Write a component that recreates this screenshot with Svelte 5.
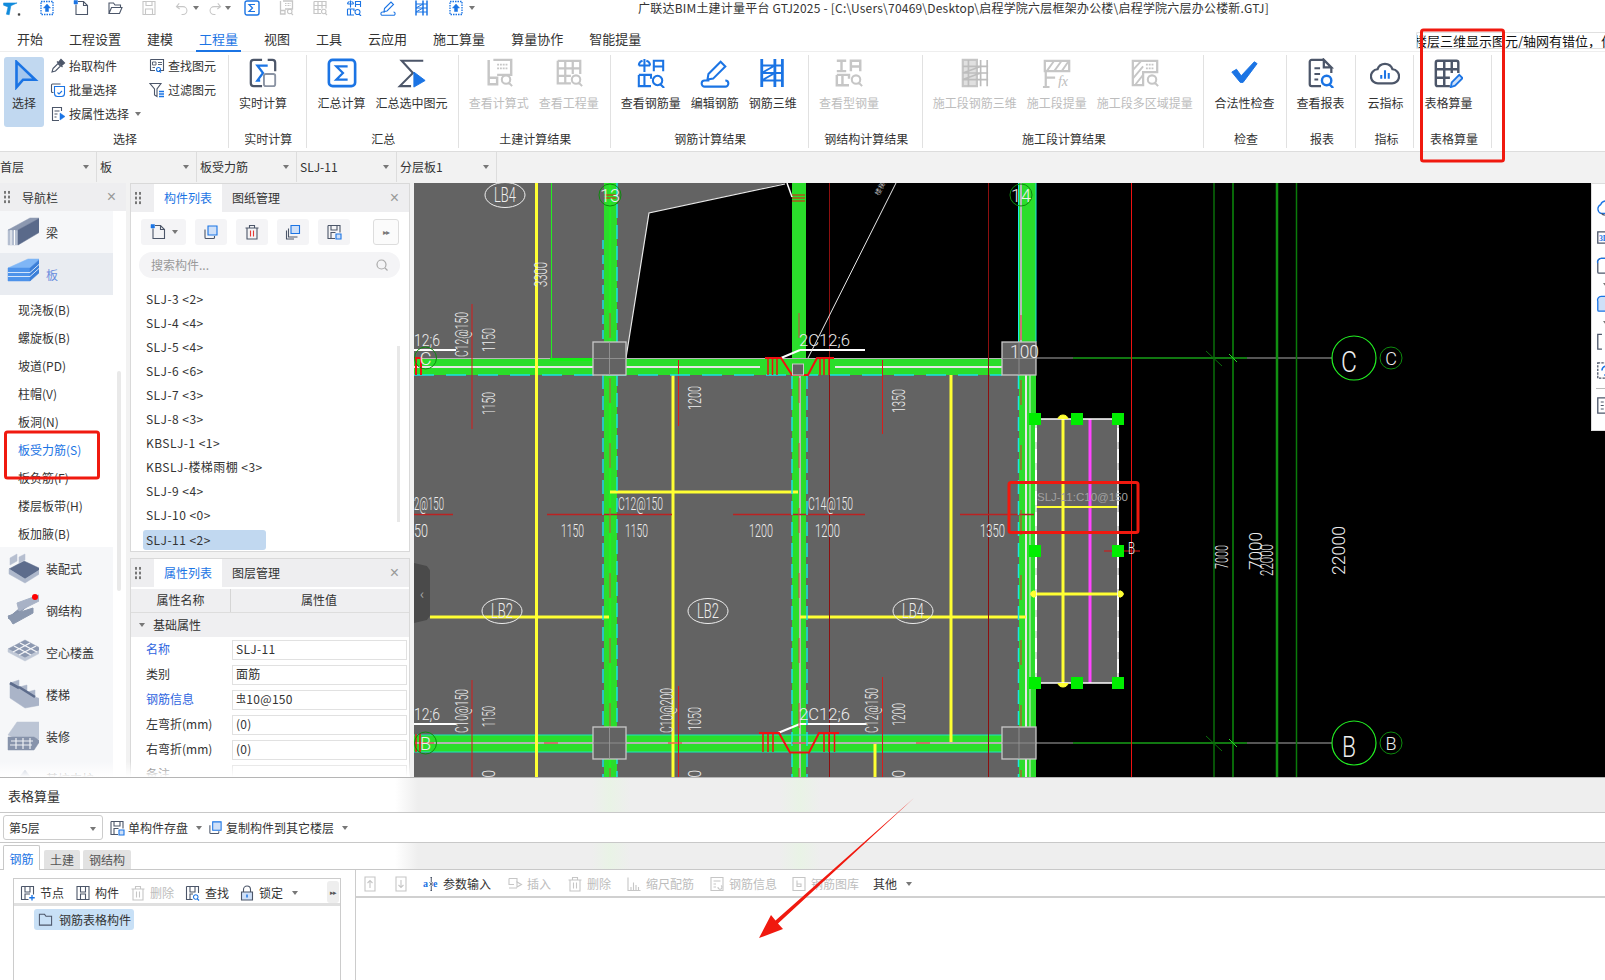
<script>
const S = '#4c5669', B = '#1b74e4', G = '#c6c6c6', L = '#cfe0f8';
const mag = (c, x = 0, y = 0) => [`M${19 + x} ${23 + y}a4.5 4.5 0 1 0 9 0a4.5 4.5 0 1 0-9 0M${26.5 + x} ${26.5 + y}l3.5 3.5`, c];
const icons = {
  logo: [['M1 7h24l-11 5-3 16-5-1 3-13-8-3Z', '#118bdc', '#118bdc', 1], ['M27 26h3v3h-3Z', '#333', '#333', 1]],
  upDoc: [['M4 3h24v26H4Z', B, 'none', 2.6, '3 2'], ['M16 8l-7 8h4v7h6v-7h4Z', B, B, 1]],
  newDoc: [['M6 9v20h23V11l-8-8H10', S], ['M21 3v8h8', S], ['M2 1h7v7H2Z', B, B, 1]],
  folder: [['M4 27V6h9l3 4h11v5M4 27h21l5-12H9Z', S]],
  save: [['M4 3h24v26H4ZM10 3v8h12V3M9 29V18h14v11', G]],
  undo: [['M9 5l-6 7 7 5M4 12h13a8.500 8.500 0 0 1 0 17h-3', G]],
  redo: [['M23 5l6 7-7 5M28 12H15a8.500 8.500 0 0 0 0 17h3', G]],
  sigmaBox: [['M6 2h20a4 4 0 0 1 4 4v20a4 4 0 0 1-4 4H6a4 4 0 0 1-4-4V6a4 4 0 0 1 4-4Z', B, 'none', 2.8], ['M22 9H10l7 7-7 7h12', B, 'none', 2.4]],
  sigmaCalc: [['M15 2H6a3 3 0 0 0-3 3v22a3 3 0 0 0 3 3h9M21 2h5a3 3 0 0 1 3 3v9', S, 'none', 2.4], ['M21 8H10l6 8-6 8h3', B, 'none', 2.4], ['M19 17h8a2 2 0 0 1 2 2v9a2 2 0 0 1-2 2h-8a2 2 0 0 1-2-2v-9a2 2 0 0 1 2-2Z', '#8a93a3', 'none', 2]],
  sigmaSel: [['M28 3H5l12 13L3 30h12', S, 'none', 2.2], ['M18 15l12 9-12 7Z', B, B, 1]],
  calcView: [['M5 2v26h9v-7H5', G, 'none', 2.6], ['M10 2h19v16H14', G, 'none', 2.6], ['M14 7h11M14 11h11', G, 'none', 2, '2 1'], mag(G)],
  qtyView: [['M4 3h24v14M4 3v24h14M4 11h24M4 19h14M12 3v24M20 3v14', G, 'none', 2.4], mag(G)],
  rebarView: [['M9 1v14M3 8a5.500 5.500 0 0 1 4-5M11 3a5.500 5.500 0 0 1 4 5M3 8h12', B], ['M19 14V3h10v11M19 9h10', B], ['M3 18v12h13M3 18h13v4M9 18v12', B], ['M18 24a5 5 0 1 0 10 0a5 5 0 1 0-10 0M26 28l4 4', B]],
  pencil: [['M9 17L22 4l5 5-13 13-6 1Z', B, 'none', 2.2], ['M10 24H5a3.200 3.200 0 0 0 0 6.500h22a3.200 3.200 0 0 0 0-6.500', B, 'none', 2.2]],
  frame: [['M4 1v30M18 1v30M26 1v30', B, 'none', 3], ['M4 8h22M4 16h22M4 24h22M4 16L18 8M4 24l14-8', B, 'none', 2]],
  steelView: [['M3 3h10M8 3v11M3 14h10', G, 'none', 2.6], ['M18 14V3h10v11M18 9h10', G, 'none', 2.6], ['M3 18v11h13M3 18h13v4M9 18v11', G, 'none', 2.6], mag(G)],
  segRebar: [['M3 2h15v28H3Z', G, '#e0e0e0', 2.4], ['M9 2v28M22 2v28M29 2v28M3 9h27M3 16h27M3 23h27M3 16l19-7M3 23l19-7', '#bdbdbd', 'none', 1.8]],
  segFx: [['M3 3h26v11H3Z', G, 'none', 2.4], ['M5 14l8-11M13 14l8-11M21 14l7-10', G, 'none', 2], ['M4 31V14M4 21h10M1 31h7', G, 'none', 2.4], { t: 'fx', x: 17, y: 30, s: 15, c: '#bdbdbd', it: 1 }],
  segArea: [['M3 3h26v12H14v14H3Z', G, 'none', 2.4], ['M3 13L12 3M3 22L14 9M6 28l8-10', G, 'none', 2], ['M17 7h9M17 11h9', G, 'none', 2, '2 1'], mag(G)],
  check: [['M3 15l5-3 5 7L27 4l3 2-15 20h-3Z', B, B, 1]],
  report: [['M19 2H6a2 2 0 0 0-2 2v24a2 2 0 0 0 2 2h10M19 2l8 8h-8ZM27 10v6', S, 'none', 2.4], ['M9 11h6M9 17h6M9 23h4', S], ['M17 24a5 5 0 1 0 10 0a5 5 0 1 0-10 0M25 28l4 4', B, 'none', 2.6]],
  cloud: [['M9 27a7.500 7.500 0 0 1-1-15a8.500 8.500 0 0 1 16 0a7.500 7.500 0 0 1-1 15Z', S, 'none', 2.4], ['M12 22v-4M16 22v-9M20 22v-6', B, 'none', 2.2]],
  tableEdit: [['M18 30H5a2 2 0 0 1-2-2V5a2 2 0 0 1 2-2h20a2 2 0 0 1 2 2v11M3 12h24M3 21h15M12 3v27M20 3v13', S, 'none', 2.6], ['M19 31l1-5 8-8 3.500 3.500-8 8Z', B, L, 2]],
  cursor: [['M8 2l20 19H15l-7 8Z', B, '#a5c7ee', 2.8]],
  dropper: [['M6 21l10-10 5 5-10 10-7 2Z', S], ['M17 9l5-6 7 7-6 5M14 7l11 11', S, S, 2.4]],
  batch: [['M7 21H5a2 2 0 0 1-2-2V6a2 2 0 0 1 2-2h16', S], ['M9 9h20v14a6 6 0 0 1-6 6H15a6 6 0 0 1-6-6Z', B], ['M15 21l3 3 6-6', B]],
  prop: [['M23 10V3H5v26h13', S], ['M9 10h10M9 16h6M9 22h4', S], ['M20 14l10 7-10 7Z', B, B, 1]],
  find: [['M3 3h26v22h-9M3 3v22h9', S], ['M7 8h7v6H7ZM18 9h8M18 13h8M7 19h5', S, 'none', 1.8], ['M15 23a4 4 0 1 0 8 0a4 4 0 1 0-8 0M21 26l3 3', B]],
  filter: [['M2 3h22l-8 11v15l-5-3V14Z', S], ['M20 19h10M20 24h10M20 29h10', B, 'none', 2.6]],
  copy: [['M4 11v16a2 2 0 0 0 2 2h15a2 2 0 0 0 2-2v-3', S], ['M10 4h18v18H10Z', B, L]],
  trash: [['M3 8h26M11 8V3h10v5M6 8v22h20V8', S]],
  trashR: [['M3 8h26M11 8V3h10v5M6 8v22h20V8', S], ['M13 13v12M19 13v12', '#e53935']],
  trashG: [['M3 8h26M11 8V3h10v5M6 8v22h20V8M13 13v12M19 13v12', G]],
  copy2: [['M3 13v17h15M7 9v17h18', S], ['M12 3h17v16H12Z', B, L]],
  saveB: [['M4 3h24v14M4 3v26h14M10 3v9h12V3M10 29V17h9', S], ['M20 20h10v10H20Z', B, L]],
  hDoc: [['M4 3h24v26H4ZM11 3v11h10V3M11 29V18h10v11', S]],
  hPlus: [['M3 3h24v16M3 3v26h14M10 3v11h10V3M10 29V18h10', S], ['M24 20v11M18.500 25.500h11', B, 'none', 2.6]],
  hFind: [['M3 3h24v13M3 3v26h12M10 3v11h10V3M10 29V18h6', S], ['M17 24a4.500 4.500 0 1 0 9 0a4.500 4.500 0 1 0-9 0M24 27l4 4', B]],
  lock: [['M9 14V9a7 7 0 0 1 14 0v5', S], ['M5 14h22v16H5Z', S, L], ['M16 19v6', B, 'none', 3]],
  fold: [['M3 28V5h11l3 4h12v19Z', S]],
  up: [['M6 2h20v28H6Z', G], ['M16 24V9M11 14l5-5 5 5', G]],
  down: [['M6 2h20v28H6Z', G], ['M16 8v15M11 18l5 5 5-5', G]],
  ae: [{ t: 'a', x: 0, y: 22, s: 20, c: B, b: 1 }, { t: 'e', x: 20, y: 22, s: 20, c: B, b: 1 }, ['M15 3h3M15 29h3M16.500 3v10M16.500 19v10M13 13l7 6M20 13l-7 6', S, 'none', 2]],
  insert: [['M4 5h16v8M4 5v12h10M4 24h16', G], ['M20 12l9 5-9 5Z', G]],
  scale: [['M4 3v26h25', G], ['M10 22v6M15 13v15M20 18v10M25 22v6', G]],
  info: [['M4 3h24v26H4Z', G], ['M9 10h14M9 16h5M9 22h5', G], ['M18 22a4 4 0 1 0 6-3', G]],
  lib: [['M4 3h24v26H4Z', G], ['M12 9v12h8v-5h-8', G]],
  r3: [['M3 10h18l8-6v22a3 3 0 0 1-3 3H3Z', S], { t: '3D', x: 5, y: 25, s: 13, c: B, b: 1 }],
  rcloud: [['M9 26a8 8 0 0 1-1-15a9 9 0 0 1 17 0M7 26h18', B], ['M9 26a8 8 0 0 0 6 3', S]],
  rbox: [['M3 12a6 6 0 0 1 6-8h20v25H5a2 2 0 0 1-2-2Z', S], ['M3 12a6 6 0 0 1 6-8h20', B]],
  rboxB: [['M3 12a6 6 0 0 1 6-8h20v25H5a2 2 0 0 1-2-2Z', B, L]],
  rdash: [['M10 4H3v25h7M18 4h11M18 29h11', S]],
  rdash2: [['M3 3h26v26H3Z', S, 'none', 2.2, '4 2'], ['M10 16a8 8 0 0 1 14-5M26 14a8 8 0 0 1-12 9', B, 'none', 2.6]],
  rlist: [['M3 3h26v26H3Z', S], ['M8 10h5M8 16h5M8 22h5M16 10h12M16 16h12M16 22h12', S, 'none', 1.8]],
  beam: [['M1 14h10v15H1Z', '#b4bed0', '#b4bed0', .5], ['M1 14L23 2h10L11 14Z', '#8c98b0', '#8c98b0', .5], ['M11 14L33 2v14L11 29Z', '#5a6a8a', '#5a6a8a', .5], ['M4 14v15M7.500 14v15', '#fff', 'none', 1]],
  slab: [['M1 10L21 1h12L23 10Z', '#7fb6f6', '#7fb6f6', .5], ['M1 10h22v13H1Z', '#4d93ea', '#4d93ea', .5], ['M23 10L33 1v13L23 23Z', '#3b7fd8', '#3b7fd8', .5], ['M1 14.500h22l10-9M1 18.500h22l10-9', '#d3e5fb', 'none', 1]],
  prefab: [['M2 17L17 9l17 8-16 10Z', '#5d6c8c', '#5d6c8c', .5], ['M2 17v5l16 9 16-10v-4l-16 10Z', '#aeb8cb', '#aeb8cb', .5], ['M3 6l7-4v7l-7 4ZM12 5l6-3v6l-6 3Z', '#b6bfd0', '#b6bfd0', .5]],
  steel: [['M1 24L24 5v4L4 26Z', '#8592aa', '#8592aa', 1], ['M10 9l22-8v6L12 17Z', '#a8b2c6', '#a8b2c6', 1], ['M1 22l25-8v5L6 30Z', '#8a97ae', '#8a97ae', 1]],
  hollow: [['M1 13L18 4l17 9-17 9Z', '#8c98b0', '#8c98b0', .5], ['M1 13v3l17 9 17-9v-3l-17 9Z', '#c0c8d6', '#c0c8d6', .5], ['M7 10l17 9M13 7l17 9M29 10l-17 9M23 7L6 16', '#f5f6f8', 'none', 1.4]],
  stairs: [['M3 5l9-3v7l8-2v7l8-2v7l6 2v6L18 30 3 20Z', '#aab4c8', '#aab4c8', .5], ['M3 5l9 5M12 9l8 5M20 14l8 5', '#5d6c8c', 'none', 2.6]],
  finish: [['M1 15L10 2h22v17H10Z', '#bcc5d5', '#bcc5d5', .5], ['M1 17h26l6 4-6 9H1Z', '#8793ab', '#8793ab', .5], ['M4 21h22M3 25h22M9 18v11M16 18v11M23 18v11', '#eef0f4', 'none', 1.2]],
  other: [['M2 28L18 8l16 20Z', '#aab4c8', '#aab4c8', .5]],
};
const tabs = ['开始', '工程设置', '建模', '工程量', '视图', '工具', '云应用', '施工算量', '算量协作', '智能提量'];
const groups = [
  { label: '实时计算', w: 77.6, pl: 0, btns: [['实时计算', 'sigmaCalc', 68]] },
  { label: '汇总', w: 152.1, pl: 0, btns: [['汇总计算', 'sigmaBox', 70], ['汇总选中图元', 'sigmaSel', 70]] },
  { label: '土建计算结果', w: 152, pl: 5, off: 1, btns: [['查看计算式', 'calcView', 70], ['查看工程量', 'qtyView', 70]] },
  { label: '钢筋计算结果', w: 198.3, pl: 0, btns: [['查看钢筋量', 'rebarView', 80], ['编辑钢筋', 'pencil', 48], ['钢筋三维', 'frame', 68]] },
  { label: '钢结构计算结果', w: 113.7, pl: 0, off: 1, btns: [['查看型钢量', 'steelView', 80]] },
  { label: '施工段计算结果', w: 281.8, pl: 0, off: 1, btns: [['施工段钢筋三维', 'segRebar', 104], ['施工段提量', 'segFx', 60], ['施工段多区域提量', 'segArea', 116]] },
  { label: '检查', w: 82.1, pl: 0, btns: [['合法性检查', 'check', 80]] },
  { label: '报表', w: 69.9, pl: 0, btns: [['查看报表', 'report', 68]] },
  { label: '指标', w: 58, pl: 0, btns: [['云指标', 'cloud', 58]] },
  { label: '表格算量', w: 78, pl: 0, btns: [['表格算量', 'tableEdit', 68]] },
];
const selects = ['首层', '板', '板受力筋', 'SLJ-11', '分层板1'];
const subs = ['现浇板(B)', '螺旋板(B)', '坡道(PD)', '柱帽(V)', '板洞(N)', '板受力筋(S)', '板负筋(F)', '楼层板带(H)', '板加腋(B)'];
const cats = [['装配式', 'prefab'], ['钢结构', 'steel', 1], ['空心楼盖', 'hollow'], ['楼梯', 'stairs'], ['装修', 'finish'], ['基坑支护', 'other']];
const parts = ['SLJ-3 <2>', 'SLJ-4 <4>', 'SLJ-5 <4>', 'SLJ-6 <6>', 'SLJ-7 <3>', 'SLJ-8 <3>', 'KBSLJ-1 <1>', 'KBSLJ-楼梯雨棚 <3>', 'SLJ-9 <4>', 'SLJ-10 <0>', 'SLJ-11 <2>'];
const props = [['名称', 'SLJ-11', 1], ['类别', '面筋'], ['钢筋信息', '10@150', 1, 1], ['左弯折(mm)', '(0)'], ['右弯折(mm)', '(0)'], ['备注', '']];
const railIcons = [['rcloud', 28], ['r3', 30], ['rbox', 38, 1], ['rboxB', 38, 1], ['rdash', 29], ['rdash2', 35], ['rlist', 30]];
const leftTools = [['节点', 'hPlus', 0, 11], ['构件', 'hDoc', 0, 11], ['删除', 'trashG', 1, 11], ['查找', 'hFind', 0, 10], ['锁定', 'lock', 0, 9, 1]];
const rightTools = [['参数输入', 'ae', 0, 16, 0], ['插入', 'insert', 1, 16, 0], ['删除', 'trashG', 1, 15, 0], ['缩尺配筋', 'scale', 1, 15, 0], ['钢筋信息', 'info', 1, 14, 0], ['钢筋图库', 'lib', 1, 14, 0]];

/* CAD drawing data, page coordinates through the viewBox */
const greys = ['M414 183H786L649 213L626 358H414Z', 'M414 358H1036V777H414Z', 'M1036 419H1118V683H1036Z'];
const greens = [[604, 183, 13, 594], [792, 183, 14, 594], [1019, 183, 17, 594], [414, 359, 605, 16], [414, 735, 605, 17]];
const lines = [
  [414, 367, 593, 367, '#e6e6e6', 2], [626, 367, 760, 367, '#e6e6e6', 2], [835, 367, 1002, 367, '#e6e6e6', 2],
  [414, 358.500, 1019, 358.500, '#b8b8b8', 1], [414, 743, 1002, 743, '#b4b4b4', 2],
  [610, 183, 610, 777, '#22ee22', 2],
  [800, 375, 800, 777, '#b8b8b8', 2], [1021, 183, 1021, 342, '#b8b8b8', 2], [1026, 375, 1026, 777, '#e8e8e8', 2], [1030, 375, 1030, 777, '#e8e8e8', 1],
  [414, 735, 1002, 735, '#19e8c0', 1], [414, 752, 1002, 752, '#19e8c0', 1], [1018.500, 183, 1018.500, 342, '#19e8e8', 1], [1036, 183, 1036, 342, '#19e8e8', 1],
  [536.500, 183, 536.500, 777, '#ffff33', 3], [673, 375, 673, 777, '#ffff33', 3], [951, 375, 951, 742, '#ffff33', 3], [875, 744, 875, 777, '#ffff33', 3],
  [610, 492, 798, 492, '#ffff33', 3], [430, 617, 609, 617, '#ffff33', 3], [800, 617, 1026, 617, '#ffff33', 3],
  [551.500, 183, 551.500, 358, '#22ee22', 1], [550, 359.500, 593, 359.500, '#14f014', 3],
  [472, 304, 472, 429, '#d81c1c', 1], [678.500, 360, 678.500, 426, '#d81c1c', 1], [882.500, 360, 882.500, 434, '#d81c1c', 1],
  [472, 680, 472, 777, '#d81c1c', 1], [678.500, 686, 678.500, 777, '#d81c1c', 1], [882.500, 677, 882.500, 777, '#d81c1c', 1],
  [829.500, 183, 829.500, 777, '#8c0f0f', 1], [988.500, 183, 988.500, 777, '#8c0f0f', 1],
  [414, 514.500, 453, 514.500, '#bb2222', 1.5], [547, 514.500, 672, 514.500, '#bb2222', 1.5], [733, 514.500, 865, 514.500, '#bb2222', 1.5], [960, 514.500, 1034, 514.500, '#bb2222', 1.5],
  [414, 350, 456, 350, '#fff', 2], [800, 350, 865, 350, '#fff', 2], [781, 358, 800, 350, '#fff', 2], [414, 724, 456, 724, '#fff', 2], [800, 724, 866, 724, '#fff', 2], [778, 733, 800, 724, '#fff', 2],
  [808, 358, 896, 183, '#e8e8e8', 1], [787, 183, 792, 197, '#fff', 1.5],
  [1036, 358, 1073, 358, '#aaa', 1], [1073, 358, 1247, 358, '#22ee22', 1], [1247, 358, 1332, 358, '#aaa', 1],
  [1036, 743, 1073, 743, '#aaa', 1], [1073, 743, 1247, 743, '#22ee22', 1], [1247, 743, 1332, 743, '#aaa', 1],
  [1214, 183, 1214, 777, '#0a6e0a', 1.5], [1233, 183, 1233, 777, '#0b8c0b', 1.5], [1277, 183, 1277, 777, '#118f11', 2.5], [1296.500, 183, 1296.500, 777, '#0a7a0a', 1.5],
  [1131.500, 183, 1131.500, 777, '#ee1111', 1],
  [1206, 351, 1222, 366, '#0a6e0a', 1], [1229, 354, 1237, 362, '#22dd22', 1], [1206, 736, 1222, 751, '#0a6e0a', 1], [1229, 739, 1237, 747, '#22dd22', 1],
  [1063, 419, 1063, 683, '#ffff33', 3], [1090, 419, 1090, 683, '#ff44ff', 3], [1036, 507, 1118, 507, '#ffff33', 2], [1036, 594, 1118, 594, '#ffff33', 3],
  [1104, 551, 1140, 551, '#dd1111', 1],
];
const dashes = [
  [603, 375, 603, 777, '#19e3e3', 1.5, '14 7'], [617, 183, 617, 777, '#19e3e3', 1.5, '14 7'], [603, 240, 603, 342, '#19e3e3', 1.5, '9 6'],
  [792, 375, 792, 777, '#19e3e3', 1.5, '14 7'], [807, 375, 807, 777, '#19e3e3', 1.5, '14 7'],
  [1018.500, 375, 1018.500, 777, '#19e3e3', 1.5, '14 7'],
  [414, 375, 1002, 375, '#19e3e3', 1.5, '20 12'],
  [610, 313, 610, 777, '#c44', 1, '25 40'], [799, 313, 799, 777, '#c44', 1, '25 40'], [1021, 315, 1021, 777, '#d33', 1, '25 40'],
  [420, 743, 1000, 743, '#d33', 1, '14 110'],
  [1036, 428, 1036, 682, '#fff', 2, '14 7'], [1118, 428, 1118, 682, '#ddd', 2, '14 7'],
];
const rebars = [
  ['M765 358H781L792 375H808L817 358H834M416 375V358H421V375', 'M768 358V375M772.500 358V375M777 358V375M820 358V375M824 358V375M829 358V375'],
  ['M759 733H779L790 752.500H809L819 733H839', 'M763 733V752M768 733V752M773 733V752M824 733V752M829 733V752M834.500 733V752M416 734V752M420 734V752'],
];
const rot = [
  ['3300', 540, 262, 287], ['C12@150', 461, 312, 357], ['1150', 487.500, 328, 352], ['1150', 487.500, 392, 415], ['1200', 693.500, 386, 410], ['1350', 898, 389, 413],
  ['C10@150', 461, 689, 733], ['1150', 487.500, 706, 727], ['C10@200', 666, 688, 733], ['1050', 693.500, 707, 731], ['C12@150', 871, 688, 733], ['1200', 898, 703, 726],
  ['50', 487.500, 770, 785], ['50', 693.500, 770, 785], ['00', 898, 770, 785],
  ['7000', 1221, 545, 569], ['7000', 1255, 532, 570], ['22000', 1266, 544, 576], ['22000', 1338, 526, 575],
];
const hor = [
  ['12;6', 414, 346, 26, 17], ['2C12;6', 799, 346, 51, 17], ['12;6', 414, 720, 26, 17], ['2C12;6', 799, 720, 51, 17], ['100', 1010, 358, 29, 18],
  ['2@150', 414, 510, 30, 19], ['C12@150', 618, 510, 45, 19], ['C14@150', 808, 510, 45, 19],
  ['50', 414, 537, 14, 18], ['1150', 561, 537, 23, 18], ['1150', 625, 537, 23, 18], ['1200', 749, 537, 24, 18], ['1200', 815, 537, 25, 18], ['1350', 980, 537, 25, 18],
];
const ellipses = [['LB4', 505, 195], ['LB2', 502, 611], ['LB2', 708, 611], ['LB4', 913, 611]];
const columns = [[593, 342, 33, 33], [1002, 342, 34, 33], [593, 727, 33, 32], [1002, 727, 34, 32]];
const small = [['13', 610, 195], ['14', 1021, 195], ['C', 425.500, 358], ['B', 425.500, 743], ['C', 1391, 358], ['B', 1391, 743]];
const handles = [[1035, 419], [1077, 419], [1118, 419], [1035, 551], [1118, 551], [1035, 683], [1077, 683], [1118, 683]];
</script>

{#snippet icon(name, size = 30)}
  <svg class="ic" width={size} height={size} viewBox="0 0 32 32" aria-hidden="true">
    {#each icons[name] as p}
      {#if p.t}
        <text x={p.x} y={p.y} font-size={p.s} fill={p.c} font-weight={p.b ? 700 : 400} font-style={p.it ? 'italic' : 'normal'} font-family="Liberation Serif, serif">{p.t}</text>
      {:else}
        <path d={p[0]} stroke={p[1]} fill={p[2] || 'none'} stroke-width={p[3] || 2.2} stroke-dasharray={p[4]} />
      {/if}
    {/each}
  </svg>
{/snippet}

{#snippet grip()}<i class="grip"></i>{/snippet}

<div class="app">
  <header class="titlebar">
    <span class="logo">{@render icon('logo', 18)}</span>
    <div class="qat">
      {@render icon('upDoc', 16)}
      {@render icon('newDoc', 16)}
      {@render icon('folder', 16)}
      {@render icon('save', 16)}
      <span class="q">{@render icon('undo', 15)}<b class="caret"></b></span>
      <span class="q">{@render icon('redo', 15)}<b class="caret"></b></span>
      {@render icon('sigmaBox', 16)}
      {@render icon('calcView', 16)}
      {@render icon('qtyView', 16)}
      {@render icon('rebarView', 16)}
      {@render icon('pencil', 16)}
      {@render icon('frame', 16)}
      {@render icon('upDoc', 16)}
      <b class="caret more"></b>
    </div>
    <div class="title">广联达BIM土建计量平台 GTJ2025 - [C:\Users\70469\Desktop\启程学院六层框架办公楼\启程学院六层办公楼新.GTJ]</div>
  </header>

  <nav class="tabs">
    {#each tabs as t}<span class="tab" class:on={t === '工程量'}>{t}</span>{/each}
  </nav>

  <section class="ribbon">
    <div class="group first">
      <div class="seltools">
        <button class="selbtn">{@render icon('cursor', 30)}<span>选择</span></button>
        <div class="smalls a">
          <span class="sm">{@render icon('dropper', 16)}抬取构件</span>
          <span class="sm">{@render icon('batch', 16)}批量选择</span>
          <span class="sm">{@render icon('prop', 16)}按属性选择<b class="caret"></b></span>
        </div>
        <div class="smalls">
          <span class="sm">{@render icon('find', 16)}查找图元</span>
          <span class="sm">{@render icon('filter', 16)}过滤图元</span>
        </div>
      </div>
      <div class="glabel">选择</div>
    </div>
    {#each groups as g}
      <div class="group" style="width:{g.w}px">
        <div class="btns" style="padding-left:{g.pl}px">
          {#each g.btns as b}
            <div class="big" class:off={g.off} style="width:{b[2]}px">
              {@render icon(b[1], 30)}
              <span>{b[0]}</span>
            </div>
          {/each}
        </div>
        <div class="glabel">{g.label}</div>
      </div>
    {/each}
  </section>

  <div class="selects">
    {#each selects as s}<div class="combo">{s}<b class="caret"></b></div>{/each}
  </div>

  <main class="work">
    <aside class="navbar">
      <div class="phead nav-head">{@render grip()}<span class="ntitle">导航栏</span><em class="close">×</em></div>
      <div class="navbody">
        <div class="navlist">
          <div class="cat">{@render icon('beam', 32)}<span>梁</span></div>
          <div class="cat cur">{@render icon('slab', 32)}<span>板</span></div>
          {#each subs as s}<div class="sub" class:act={s.startsWith('板受力筋')}>{s}</div>{/each}
          {#each cats as c}
            <div class="cat">
              {@render icon(c[1], 32)}
              {#if c[2]}<i class="dot"></i>{/if}
              <span>{c[0]}</span>
            </div>
          {/each}
        </div>
        <div class="navscroll"><i></i></div>
      </div>
    </aside>

    <div class="panels">
      <section class="panel parts">
        <div class="phead">{@render grip()}<span class="ptab on">构件列表</span><span class="ptab">图纸管理</span><em class="close">×</em></div>
        <div class="ptools">
          <span class="tb wide">{@render icon('newDoc', 16)}<b class="caret"></b></span>
          <span class="tb">{@render icon('copy', 16)}</span>
          <span class="tb">{@render icon('trashR', 16)}</span>
          <span class="tb">{@render icon('copy2', 16)}</span>
          <span class="tb">{@render icon('saveB', 16)}</span>
          <span class="tb expand"><b>▸▸</b></span>
        </div>
        <div class="search"><span>搜索构件...</span><svg width="12" height="12" viewBox="0 0 12 12"><path d="M1 5.500a4.500 4.500 0 1 0 9 0a4.500 4.500 0 1 0-9 0M9 9l2.500 2.500" fill="none" stroke="#aaa" stroke-width="1.200" /></svg></div>
        <div class="plist">
          {#each parts as p}<div class="pitem"><span class:sel={p.startsWith('SLJ-11')}>{p}</span></div>{/each}
          <i class="pscroll"></i>
        </div>
      </section>
      <section class="panel attrs">
        <div class="phead">{@render grip()}<span class="ptab on">属性列表</span><span class="ptab">图层管理</span><em class="close">×</em></div>
        <div class="thead"><span>属性名称</span><span>属性值</span></div>
        <div class="tsection"><b class="caret"></b>基础属性</div>
        {#each props as r}
          <div class="trow">
            <span class="k" class:link={r[2]}>{r[0]}</span>
            <span class="v">{#if r[3]}<small>虫</small>{/if}{r[1]}</span>
          </div>
        {/each}
      </section>
      <i class="fade"></i>
    </div>

    <div class="canvas">
      <svg width="1191" height="594" viewBox="414 183 1191 594" class="cad">
        <rect x="414" y="183" width="1191" height="594" fill="#000" />
        {#each greys as d}<path {d} fill="#636363" />{/each}
        <path d="M626 358L649 213L785 184" fill="none" stroke="#e8e8e8" stroke-width="1.200" />
        {#each greens as r}<rect x={r[0]} y={r[1]} width={r[2]} height={r[3]} fill="#2bdd2b" />{/each}
        {#each lines as l}<line x1={l[0]} y1={l[1]} x2={l[2]} y2={l[3]} stroke={l[4]} stroke-width={l[5]} />{/each}
        {#each dashes as l}<line x1={l[0]} y1={l[1]} x2={l[2]} y2={l[3]} stroke={l[4]} stroke-width={l[5]} stroke-dasharray={l[6]} />{/each}
        <rect x="1036" y="419" width="82" height="264" fill="none" stroke="#fff" stroke-width="1.500" />
        <path d="M792 195h13M792 198h13M792 201h13M604 195h12M604 198h12" stroke="#f01010" stroke-width="1.200" fill="none" />
        {#each rebars as r}
          <path d={r[0]} fill="none" stroke="#f01010" stroke-width="2" />
          <path d={r[1]} fill="none" stroke="#f01010" stroke-width="1.500" />
        {/each}
        {#each columns as c}
          <rect x={c[0]} y={c[1]} width={c[2]} height={c[3]} fill="#636363" stroke="#c8c8c8" stroke-width="1.300" />
          <path d="M{c[0] + c[2] / 2} {c[1]}v{c[3]}M{c[0]} {c[1] + c[3] / 2}h{c[2]}" stroke="#9a9a9a" stroke-width=".8" />
        {/each}
        <rect x="792.500" y="364" width="11" height="11" fill="#636363" stroke="#ccc" />
        <g class="cadtext" fill="#eee">
          {#each rot as t}
            <text transform="translate({t[1] + 7} {t[3]}) rotate(-90)" font-size="19" textLength={t[3] - t[2]} lengthAdjust="spacingAndGlyphs">{t[0]}</text>
          {/each}
          {#each hor as t}
            <text x={t[1]} y={t[2]} font-size={t[4]} textLength={t[3]} lengthAdjust="spacingAndGlyphs">{t[0]}</text>
          {/each}
          {#each ellipses as e}
            <ellipse cx={e[1]} cy={e[2]} rx="20" ry="12.500" fill="none" stroke="#eee" stroke-width="1" />
            <text x={e[1] - 11} y={e[2] + 7} font-size="20" textLength="22" lengthAdjust="spacingAndGlyphs">{e[0]}</text>
          {/each}
          {#each small as s}
            <circle cx={s[1]} cy={s[2]} r="11" fill="none" stroke="#0e8a0e" stroke-width="1" />
            <text x={s[1]} y={s[2] + 7} font-size="18" text-anchor="middle">{s[0]}</text>
          {/each}
          <circle cx="1354" cy="358" r="22" fill="none" stroke="#22ee22" stroke-width="1.200" />
          <circle cx="1354" cy="743" r="22" fill="none" stroke="#22ee22" stroke-width="1.200" />
          <text x="1341" y="372" font-size="29" textLength="16" lengthAdjust="spacingAndGlyphs">C</text>
          <text x="1342" y="757" font-size="29" textLength="14" lengthAdjust="spacingAndGlyphs">B</text>
          <text x="1128" y="554" font-size="17" textLength="7" lengthAdjust="spacingAndGlyphs">B</text>
          <text transform="translate(879 196) rotate(-62)" font-size="7" font-family="Noto Sans CJK SC, sans-serif">楼梯间</text>
          <text class="sel-label" x="1037" y="501" font-size="11.500" fill="#a0a0a0" textLength="91" lengthAdjust="spacingAndGlyphs">SLJ-11:C10@150</text>
        </g>
        {#each handles as h}<rect x={h[0] - 6} y={h[1] - 6} width="12" height="12" fill="#00ee00" />{/each}
        <path d="M1036 592a3 3 0 1 0 0 4M1118 592a3 3 0 1 1 0 4M1058 419a5 4 0 0 1 10 0M1058 683a5 4 0 0 0 10 0" fill="#ffff33" stroke="#ffff33" />
      </svg>
      <div class="collapse"><span>‹</span></div>
      <div class="rail">
        {#each railIcons as n}
          <span class="ri" style="height:{n[1]}px">{@render icon(n[0], 19)}{#if n[2]}<b class="caret"></b>{/if}</span>
        {/each}
        <hr />
      </div>
    </div>
  </main>

  <section class="calc">
    <div class="ctitle">表格算量</div>
    <div class="cbar">
      <div class="ccombo">第5层<b class="caret"></b></div>
      <span class="cact first">{@render icon('saveB', 16)}单构件存盘<b class="caret"></b></span>
      <span class="cact">{@render icon('copy', 15)}复制构件到其它楼层<b class="caret"></b></span>
    </div>
    <div class="ctabs">
      <span class="ctab on">钢筋</span><span class="ctab">土建</span><span class="ctab">钢结构</span>
    </div>
    <div class="cbody">
      <div class="cleft">
        <div class="lpane">
          <div class="ltools">
            {#each leftTools as t}
              <span class="lt" class:dim={t[2]} style="margin-right:{t[3]}px">{@render icon(t[1], 16)}{t[0]}{#if t[4]}<b class="caret"></b>{/if}</span>
            {/each}
            <span class="lexpand">▸▸</span>
          </div>
          <div class="lrow"><span class="lsel">{@render icon('fold', 15)}钢筋表格构件</span></div>
        </div>
      </div>
      <div class="cright">
        <div class="rtools">
          <span class="rbtn">{@render icon('up', 16)}</span>
          <span class="rbtn">{@render icon('down', 16)}</span>
          {#each rightTools as t}
            <span class="lt" class:dim={t[2]} style="margin-right:{t[3]}px">{@render icon(t[1], 16)}{t[0]}</span>
          {/each}
          <span class="lt">其他<b class="caret"></b></span>
        </div>
      </div>
    </div>
  </section>

  <div class="floatbox"><span>楼层三维显示图元/轴网有错位，位置不对</span></div>
  <svg class="marks" width="1605" height="980" viewBox="0 0 1605 980" aria-hidden="true">
    <rect x="1421.500" y="30" width="82" height="131" rx="2" />
    <rect x="5.500" y="432" width="93" height="46" rx="2" />
    <rect x="1009" y="482.500" width="129" height="50" rx="2" />
    <path class="arrow" d="M914 798L778 923.500L783 929L759 938L771 915L775.500 920.500Z" />
  </svg>
</div>

<style>
  :global(body) { margin: 0; background: #fff; }
  .app { position: relative; width: 1605px; height: 980px; overflow: hidden; background: #fff; color: #333; font: 12px/16px "Noto Sans CJK SC", "Noto Sans", sans-serif; }
  .ic { display: block; flex: none; }
  .caret { display: inline-block; width: 0; height: 0; border: 3px solid transparent; border-top: 4px solid #777; border-bottom: 0; flex: none; }

  .titlebar { height: 27px; display: flex; align-items: center; background: #fff; padding: 0 0 11px 3px; box-sizing: border-box; }
  .logo { width: 20px; }
  .qat { display: flex; align-items: center; gap: 18px; margin-left: 16px; width: 599px; }
  .q { display: flex; align-items: center; gap: 3px; margin-right: -10px; }
  .q + .q { margin-right: -5px; }
  .qat .more { margin-left: -13px; }
  .title { font-size: 12px; white-space: nowrap; color: #333; letter-spacing: .21px; }

  .tabs { height: 24px; display: flex; gap: 26px; padding-left: 17px; align-items: stretch; border-bottom: 1px solid #eee; box-sizing: content-box; }
  .tab { font-size: 13px; line-height: 24px; color: #333; position: relative; }
  .tab.on { color: #1b74e4; }
  .tab.on::after { content: ""; position: absolute; left: -3px; right: -3px; bottom: -1px; height: 2px; background: #1b74e4; }

  .ribbon { height: 99px; display: flex; background: #fff; border-bottom: 1px solid #ddd; }
  .group { height: 93px; margin-top: 3px; display: grid; grid-template-rows: 75px 18px; border-right: 1px solid #e1e1e1; box-sizing: border-box; flex: none; }
  .group.first { width: 229px; }
  .seltools { display: flex; padding: 2px 0 0 4px; }
  .selbtn { width: 40px; height: 70px; border: 0; border-radius: 3px; background: #c1d8f0; font: inherit; color: #333; padding: 3px 0 0; display: flex; flex-direction: column; align-items: center; gap: 5px; }
  .smalls { width: 99px; display: flex; flex-direction: column; gap: 8px; padding-top: 1px; }
  .smalls.a { margin-left: 6px; }
  .sm { display: flex; align-items: center; gap: 3px; height: 16px; white-space: nowrap; }
  .sm .caret { margin-left: 3px; }
  .glabel { text-align: center; line-height: 18px; font-size: 12px; color: #333; padding-left: 2px; }
  .btns { display: flex; }
  .big { display: flex; flex-direction: column; align-items: center; padding-top: 3px; gap: 7px; white-space: nowrap; flex: none; }
  .big.off { color: #bdbdbd; }

  .selects { height: 31px; display: flex; background: #f2f2f2; }
  .combo { width: 96px; padding-left: 3px; line-height: 30px; position: relative; border-right: 1px solid #ddd; height: 30px; color: #333; }
  .combo:first-child { padding-left: 0; }
  .combo .caret { position: absolute; right: 7px; top: 13px; }

  .work { height: 594px; display: flex; background: #f2f2f2; }
  .navbar { width: 126px; flex: none; background: #fff; }
  .phead { height: 28px; display: flex; align-items: stretch; background: #eeeef0; position: relative; }
  .grip { width: 8px; height: 14px; margin: 7px 0 0 3px; flex: none; background: radial-gradient(circle, #777 1.200px, transparent 1.500px) 0 0 / 4px 4.700px; }
  .ntitle { margin-left: 11px; line-height: 30px; }
  .close { position: absolute; right: 10px; top: 6px; font: 400 16px/16px "Liberation Sans", sans-serif; color: #999; }
  .navbody { display: flex; height: 566px; overflow: hidden; }
  .navlist { width: 113px; flex: none; }
  .cat { height: 42px; background: #f6f7f9; display: flex; align-items: center; padding-left: 7px; gap: 7px; position: relative; }
  .cat.cur { background: #e9ecf1; color: #6a8ede; }
  .cat span { font-size: 12px; padding-top: 2px; }
  .dot { position: absolute; left: 32px; top: 5px; width: 6px; height: 6px; background: #f00; border-radius: 50%; }
  .sub { height: 28px; line-height: 30px; padding-left: 18px; background: #fff; }
  .sub.act { color: #1b74e4; }
  .navscroll { flex: 1; position: relative; }
  .navscroll i { position: absolute; left: 4px; top: 160px; width: 4px; height: 220px; background: #e9e9e9; border-radius: 2px; }

  .panels { width: 280px; margin-left: 4px; flex: none; display: flex; flex-direction: column; gap: 6px; position: relative; }
  .panel { background: #fff; border: 1px solid #d9d9d9; border-bottom: 0; box-sizing: border-box; }
  .parts { height: 369px; border-bottom: 1px solid #d9d9d9; }
  .attrs { height: 219px; overflow: hidden; }
  .ptab { width: 68px; text-align: center; line-height: 28px; flex: none; }
  .phead .grip + .ptab { margin-left: 12px; }
  .ptab.on { background: #fff; color: #1b74e4; }
  .ptools { height: 26px; margin-top: 7px; padding-left: 10px; display: flex; gap: 9px; position: relative; }
  .tb { width: 32px; height: 26px; background: #f4f4f6; border-radius: 3px; display: flex; align-items: center; justify-content: center; }
  .tb.wide { width: 45px; gap: 6px; }
  .tb.expand { position: absolute; left: 242px; width: 24px; border: 1px solid #ddd; box-sizing: content-box; height: 24px; font-size: 8px; color: #777; background: #fbfbfb; }
  .tb.expand b { font-weight: 400; letter-spacing: -1px; }
  .search { height: 26px; margin: 7px 9px 0 8px; background: #f4f4f6; border-radius: 13px; display: flex; align-items: center; justify-content: space-between; padding: 0 12px; color: #999; }
  .plist { position: relative; margin-top: 9px; padding-left: 12px; }
  .pitem { height: 24px; line-height: 24px; letter-spacing: .45px; color: #333; }
  .pitem span { display: inline-block; line-height: 21px; padding-left: 3px; }
  .pitem span.sel { background: #c1d8f0; width: 120px; border-radius: 3px; position: relative; top: 1px; line-height: 20px; }
  .pscroll { position: absolute; right: 9px; top: 59px; width: 3px; height: 176px; background: #e8e8e8; }
  .thead { height: 23px; margin-top: 2px; background: #efeff1; display: grid; grid-template-columns: 100px 176px; text-align: center; line-height: 21px; border-bottom: 1px solid #ddd; }
  .thead span:first-child { border-right: 1px solid #d5d5d5; }
  .tsection { height: 24px; line-height: 22px; background: #efeff1; padding-left: 8px; display: flex; align-items: center; gap: 8px; margin-bottom: 3px; }
  .trow { height: 25px; display: flex; align-items: flex-start; }
  .k { width: 86px; margin-left: 15px; line-height: 18px; }
  .k.link { color: #2f66e0; }
  .v { width: 175px; height: 20px; border: 1px solid #e1e1e1; box-sizing: border-box; line-height: 16px; padding-left: 3px; letter-spacing: .3px; }
  .v small { font-size: 10px; position: relative; top: -2px; }
  .fade { position: absolute; left: -130px; right: 0; bottom: 0; height: 16px; background: linear-gradient(rgba(255,255,255,0), #fff); }

  .canvas { flex: 1; position: relative; overflow: hidden; margin-left: 4px; }
  .cad { display: block; }
  .cadtext { font-family: Roboto, "Liberation Sans", sans-serif; font-weight: 300; }
  .sel-label { font-family: "Liberation Sans", sans-serif; font-weight: 400; }
  .collapse { position: absolute; left: 0; top: 380px; width: 16px; height: 60px; background: #4a4a4a; clip-path: polygon(0 0, 80% 5%, 100% 12%, 100% 88%, 80% 95%, 0 100%); color: #aaa; font-size: 14px; line-height: 60px; text-align: center; }
  .rail { position: absolute; right: 0; top: 0; width: 14px; height: 248px; background: #fff; border: 1px solid #ddd; border-right: 0; box-sizing: border-box; overflow: hidden; padding: 14px 0 0 4px; display: flex; flex-direction: column; }
  .ri { display: block; position: relative; flex: none; }
  .ri .caret { position: absolute; left: 7px; top: 27px; }
  .rail hr { position: absolute; left: 4px; top: 204px; margin: 0; border: 0; border-top: 1px solid #bbb; width: 10px; }

  .calc { height: 203px; border-top: 1px solid #b5b5b5; box-sizing: border-box; background: #fff; }
  .ctitle, .ctabs { background: linear-gradient(90deg, #fff 395px, #eee 418px, #eee 592px, #e9f3e6 610px, #eee 630px, #eee 780px, #e9f3e6 800px, #eee 820px); }
  .ctitle { height: 34px; font-size: 13px; line-height: 36px; padding-left: 8px; border-bottom: 1px solid #c8c8c8; }
  .cbar { height: 29px; display: flex; align-items: center; border-bottom: 1px solid #c8c8c8; }
  .ccombo { width: 100px; height: 25px; margin-left: 3px; border: 1px solid #ccc; border-radius: 3px; box-sizing: border-box; line-height: 24px; padding-left: 5px; position: relative; }
  .ccombo .caret { position: absolute; right: 6px; top: 11px; }
  .cact { display: flex; align-items: center; gap: 3px; margin-left: 4px; white-space: nowrap; }
  .cact .caret { margin-left: 5px; }
  .cact.first { margin-left: 6px; margin-right: 2px; }
  .ctabs { height: 26px; padding-left: 3px; display: flex; align-items: flex-end; gap: 4px; border-bottom: 1px solid #c8c8c8; position: relative; }
  .ctab { width: 36px; height: 19px; background: #e2e2e2; text-align: center; line-height: 19px; border-radius: 2px 2px 0 0; color: #555; }
  .ctab:last-child { width: 48px; margin-left: -1px; }
  .ctab.on { width: 37px; height: 25px; background: #fff; color: #1b74e4; line-height: 26px; border: 1px solid #c8c8c8; border-bottom: 0; box-sizing: border-box; position: relative; top: 1px; }
  .cbody { display: grid; grid-template-columns: 355px 1fr; height: 115px; }
  .cleft { padding: 8px 14px 0 13px; }
  .lpane { height: 120px; border: 1px solid #ccc; box-sizing: border-box; }
  .ltools { height: 21px; padding: 3px 0 0 6px; border-bottom: 3px solid #e0e0e0; display: flex; align-items: center; position: relative; box-sizing: content-box; }
  .lt { display: flex; align-items: center; gap: 4px; white-space: nowrap; }
  .lt .caret { margin-left: 5px; }
  .lt.dim { color: #bdbdbd; }
  .lexpand { position: absolute; right: 1px; top: 2px; width: 12px; height: 22px; background: #eee; border-radius: 3px; font-size: 7px; line-height: 22px; text-align: center; letter-spacing: -1px; color: #555; }
  .lrow { padding: 3px 0 0 20px; }
  .lsel { display: inline-flex; align-items: center; gap: 6px; width: 96px; height: 21px; padding-left: 4px; background: #c8e0f6; border-radius: 3px; }
  .cright { border-left: 1px solid #ccc; }
  .rtools { height: 24px; padding: 2px 0 0 6px; border-bottom: 2px solid #d0d0d0; display: flex; align-items: center; }
  .rbtn { width: 31px; display: block; flex: none; }
  .rbtn + .rbtn + .lt { margin-left: -1px; }

  .floatbox { position: absolute; left: 1416px; top: 32px; width: 189px; height: 17px; background: #fff; border: 1px solid #e0e0e0; border-right: 0; border-radius: 2px 0 0 2px; box-sizing: border-box; overflow: hidden; white-space: nowrap; font-size: 13px; line-height: 15px; color: #111; }
  .floatbox span { margin-left: -3px; }
  .marks { position: absolute; inset: 0; pointer-events: none; }
  .marks rect { fill: none; stroke: #f0190f; stroke-width: 3; }
  .arrow { fill: #f0190f; }
</style>
